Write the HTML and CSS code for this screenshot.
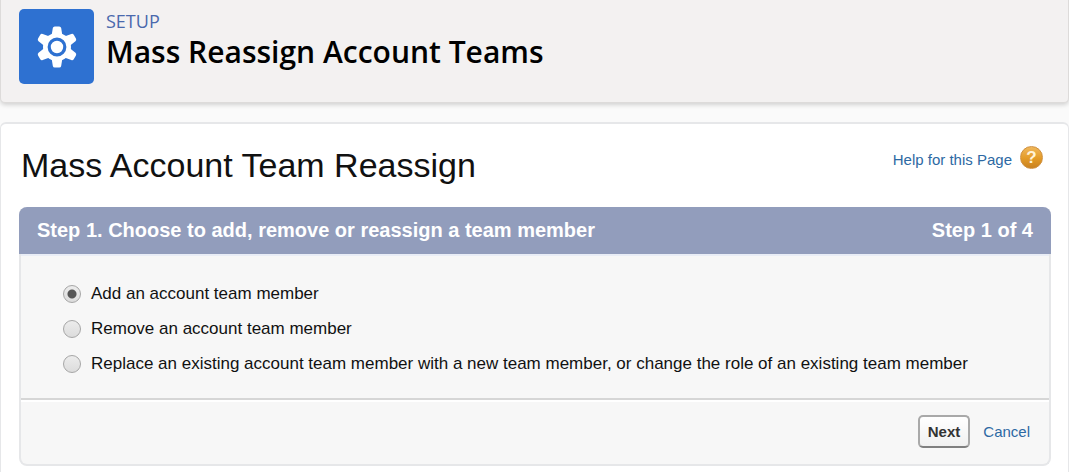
FILE: index.html
```html
<!DOCTYPE html>
<html lang="en">
<head>
  <meta charset="UTF-8" />
  <meta name="viewport" content="width=device-width, initial-scale=1.0"/>
  <title>Mass Reassign Account Teams</title>
  <link rel="stylesheet" href="styles.css">
</head>
<body>

  <header class="page-header">
    <div class="setup-icon">
      <svg viewBox="0 0 42 42" width="42" height="42" aria-hidden="true">
        <g fill="#fff" stroke="#fff" stroke-width="4" stroke-linejoin="round">
          <path id="tooth" d="M18.8 2.4h4.4l1.3 8h-7z"/>
          <use href="#tooth" transform="rotate(60 21 21)"/>
          <use href="#tooth" transform="rotate(120 21 21)"/>
          <use href="#tooth" transform="rotate(180 21 21)"/>
          <use href="#tooth" transform="rotate(240 21 21)"/>
          <use href="#tooth" transform="rotate(300 21 21)"/>
        </g>
        <circle cx="21" cy="21" r="14" fill="#fff"/>
        <circle cx="21" cy="21" r="7.8" fill="#fff" stroke="#2e71d1" stroke-width="3.2"/>
      </svg>
    </div>
    <div>
      <p class="setup-label">SETUP</p>
      <h1 class="setup-title">Mass Reassign Account Teams</h1>
    </div>
  </header>

  <main class="panel">
    <div class="panel-top">
      <h2 class="panel-title">Mass Account Team Reassign</h2>
      <div class="help">
        <a href="#">Help for this Page</a>
        <span class="help-icon">?</span>
      </div>
    </div>

    <form class="wizard">
      <div class="wizard-header">
        <h3>Step 1. Choose to add, remove or reassign a team member</h3>
        <span>Step 1 of 4</span>
      </div>

      <div class="wizard-body">
        <label class="option">
          <input type="radio" name="action" value="add" checked>
          Add an account team member
        </label>
        <label class="option">
          <input type="radio" name="action" value="remove">
          Remove an account team member
        </label>
        <label class="option">
          <input type="radio" name="action" value="replace">
          Replace an existing account team member with a new team member, or change the role of an existing team member
        </label>
      </div>

      <div class="wizard-footer">
        <button class="btn" type="button">Next</button>
        <a class="cancel" href="#">Cancel</a>
      </div>
    </form>
  </main>

</body>
</html>
```

FILE: styles.css
```css
* {
  box-sizing: border-box;
  margin: 0;
  padding: 0;
}

body {
  background: #fafafa;
  color: #111;
  font-family: "Liberation Sans", Arial, sans-serif;
}

a {
  color: #2d69a3;
  text-decoration: none;
}

a:hover {
  text-decoration: underline;
}

/* Setup header */
.page-header {
  display: flex;
  gap: 12px;
  padding: 9px 18px 18px;
  background: #f3f1f1;
  border: 1px solid #dddbda;
  border-top: none;
  border-radius: 0 0 5px 5px;
  box-shadow: 0 2px 4px rgba(0,0,0,0.16);
  font-family: "Open Sans", "Noto Sans", sans-serif;
}

.setup-icon {
  display: flex;
  align-items: center;
  justify-content: center;
  flex: none;
  width: 75px;
  height: 75px;
  background: #2e71d1;
  border-radius: 5px;
}

.setup-label {
  color: #4a69ad;
  font-size: 18px;
  line-height: 25px;
}

.setup-title {
  color: #000;
  font-size: 30px;
  font-weight: 600;
  line-height: 36px;
}

/* Content panel */
.panel {
  margin-top: 19px;
  padding: 19px 17px 24px 18px;
  background: #fff;
  border: 1px solid #e6e7e9;
  border-width: 2px 1px 1px;
  border-radius: 6px;
}

.panel-top {
  display: flex;
  justify-content: space-between;
  align-items: flex-start;
  margin-bottom: 20px;
}

.panel-title {
  padding: 2px;
  font-size: 34px;
  font-weight: normal;
  line-height: 40px;
}

.help {
  display: flex;
  align-items: flex-start;
  gap: 8px;
  padding: 3px 8px 0 0;
  font-size: 15px;
  line-height: 28px;
}

.help-icon {
  width: 23px;
  height: 23px;
  border-radius: 50%;
  background: linear-gradient(#f0b85c, #e39a26 55%, #c98220);
  border: 1px solid #cf9040;
  color: #fff3d8;
  font-size: 17px;
  font-weight: bold;
  line-height: 21px;
  text-align: center;
}

/* Wizard */
.wizard {
  background: #f7f7f7;
  border: 2px solid #e6e7e9;
  border-top: none;
  border-radius: 8px;
}

.wizard-header {
  display: flex;
  justify-content: space-between;
  margin: 0 -2px;
  padding: 11px 18px 12px;
  background: #929dbc;
  border-radius: 8px 8px 0 0;
  color: #fff;
  font-size: 20px;
  font-weight: bold;
  line-height: 24px;
}

.wizard-header h3 {
  font-size: 20px;
}

.wizard-body {
  display: flex;
  flex-direction: column;
  gap: 11px;
  padding: 26px 42px 22px;
  border-top: 2px solid #e9edf6;
  border-bottom: 2px solid #d6d6d6;
}

.option {
  display: flex;
  align-items: center;
  gap: 10px;
  font-size: 17px;
  line-height: 24px;
}

.option input {
  appearance: none;
  flex: none;
  width: 18px;
  height: 18px;
  border: 1px solid #a6a6a6;
  border-radius: 50%;
  background: linear-gradient(#ececec, #dcdcdc);
}

.option input:checked {
  background: radial-gradient(circle, #555 4px, transparent 5px), linear-gradient(#ececec, #dcdcdc);
}

.wizard-footer {
  display: flex;
  justify-content: flex-end;
  align-items: center;
  gap: 13px;
  padding: 13px 19px 16px;
  border-top: 2px solid #fff;
}

.btn {
  height: 33px;
  padding: 0 8px;
  background: linear-gradient(#fff, #f0f0f0);
  border: 2px solid #a9a9a9;
  border-bottom-color: #7f7f7f;
  border-radius: 5px;
  color: #333;
  font-family: inherit;
  font-size: 15px;
  font-weight: bold;
  cursor: pointer;
}

.cancel {
  font-size: 15px;
}
```
